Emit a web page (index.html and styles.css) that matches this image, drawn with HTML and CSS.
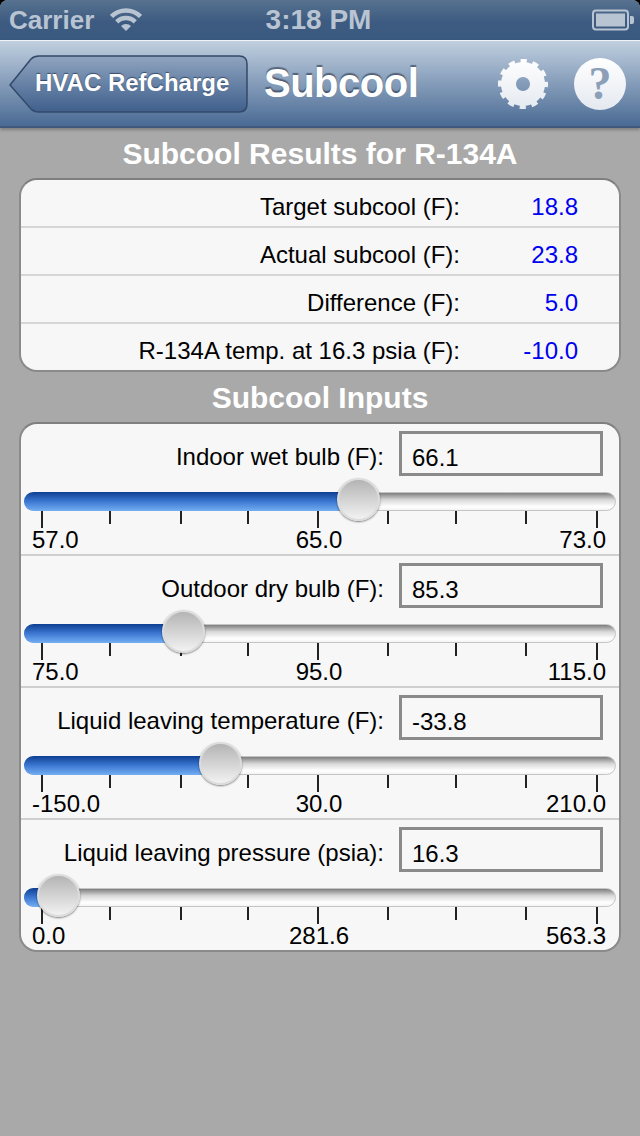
FILE: index.html
```html
<!DOCTYPE html>
<html lang="en">
<head>
<meta charset="utf-8">
<title>Subcool</title>
<link rel="stylesheet" href="styles.css">
</head>
<body>
<div class="screen">
  <header class="status">
    <div class="status-left">
      <span>Carrier</span>
      <svg class="wifi" width="32" height="24" viewBox="0 0 32 24"><path d="M16 23 L11 18 A7 7 0 0 1 21 18 Z" fill="#b9c4d3"/><path d="M6.800 13.800 A13 13 0 0 1 25.200 13.800" fill="none" stroke="#b9c4d3" stroke-width="4.500"/><path d="M1.500 8.500 A20.500 20.500 0 0 1 30.500 8.500" fill="none" stroke="#b9c4d3" stroke-width="4.500"/></svg>
    </div>
    <div class="status-time">3:18 PM</div>
    <div class="status-right">
      <svg width="42" height="22" viewBox="0 0 42 22"><rect x="1" y="1.500" width="35" height="19" rx="3" fill="none" stroke="#b9c4d3" stroke-width="2"/><rect x="4" y="4.500" width="29" height="13" fill="#b9c4d3"/><path d="M38 7 h2 a2 2 0 0 1 2 2 v4 a2 2 0 0 1 -2 2 h-2 Z" fill="#b9c4d3"/></svg>
    </div>
  </header>
  <nav class="nav">
    <a class="back">
      <svg class="back-shape" width="240" height="60" viewBox="0 0 240 60">
        <defs><linearGradient id="bk" x1="0" y1="0" x2="0" y2="1"><stop offset="0" stop-color="#8fa4bf"/><stop offset="1" stop-color="#3f5f8c"/></linearGradient></defs>
        <path d="M1 30 L22 4 Q25 1 30 1 H230 Q238 1 238 9 V49 Q238 57 230 57 H30 Q25 57 22 54 Z" fill="url(#bk)" stroke="#33496a" stroke-width="1.500"/>
      </svg>
      <span class="back-text">HVAC RefCharge</span>
    </a>
    <h1 class="title">Subcool</h1>
    <div class="nav-icons">
      <svg class="gear" width="52" height="52" viewBox="0 0 52 52">
        <defs><linearGradient id="ic" gradientUnits="userSpaceOnUse" x1="0" y1="0" x2="0" y2="52"><stop offset="0" stop-color="#ffffff"/><stop offset="1" stop-color="#e4e9f0"/></linearGradient></defs>
        <circle cx="26" cy="26" r="22.500" fill="none" stroke="url(#ic)" stroke-width="5" stroke-dasharray="6.200 5.580" stroke-dashoffset="3.100"/>
        <path fill="url(#ic)" fill-rule="evenodd" d="M26 4a22 22 0 1 0 .01 0zM26 19a7 7 0 1 1 -.01 0z"/>
      </svg>
      <div class="help">?</div>
    </div>
  </nav>
  <main class="content">
    <h2 class="heading">Subcool Results for R-134A</h2>
    <section class="card">
      <div class="result"><span class="result-label">Target subcool (F):</span><span class="result-value">18.8</span></div>
      <div class="result"><span class="result-label">Actual subcool (F):</span><span class="result-value">23.8</span></div>
      <div class="result"><span class="result-label">Difference (F):</span><span class="result-value">5.0</span></div>
      <div class="result"><span class="result-label">R-134A temp. at 16.3 psia (F):</span><span class="result-value">-10.0</span></div>
    </section>
    <h2 class="heading">Subcool Inputs</h2>
    <section class="card">
      <div class="input-row">
        <div class="field"><label class="field-label">Indoor wet bulb (F):</label><div class="field-box">66.1</div></div>
        <div class="slider"><div class="fill" style="width:57%"></div><div class="thumb" style="left:312px"></div></div>
        <div class="ticks"><i class="long"></i><i></i><i></i><i></i><i class="long"></i><i></i><i></i><i></i><i class="long"></i></div>
        <div class="scale"><span>57.0</span><span>65.0</span><span>73.0</span></div>
      </div>
      <div class="input-row">
        <div class="field"><label class="field-label">Outdoor dry bulb (F):</label><div class="field-box">85.3</div></div>
        <div class="slider"><div class="fill" style="width:27%"></div><div class="thumb" style="left:137px"></div></div>
        <div class="ticks"><i class="long"></i><i></i><i></i><i></i><i class="long"></i><i></i><i></i><i></i><i class="long"></i></div>
        <div class="scale"><span>75.0</span><span>95.0</span><span>115.0</span></div>
      </div>
      <div class="input-row">
        <div class="field"><label class="field-label">Liquid leaving temperature (F):</label><div class="field-box">-33.8</div></div>
        <div class="slider"><div class="fill" style="width:33%"></div><div class="thumb" style="left:174px"></div></div>
        <div class="ticks"><i class="long"></i><i></i><i></i><i></i><i class="long"></i><i></i><i></i><i></i><i class="long"></i></div>
        <div class="scale"><span>-150.0</span><span>30.0</span><span>210.0</span></div>
      </div>
      <div class="input-row">
        <div class="field"><label class="field-label">Liquid leaving pressure (psia):</label><div class="field-box">16.3</div></div>
        <div class="slider"><div class="fill" style="width:6%"></div><div class="thumb" style="left:12px"></div></div>
        <div class="ticks"><i class="long"></i><i></i><i></i><i></i><i class="long"></i><i></i><i></i><i></i><i class="long"></i></div>
        <div class="scale"><span>0.0</span><span>281.6</span><span>563.3</span></div>
      </div>
    </section>
  </main>
</div>
</body>
</html>
```
FILE: styles.css
```css
* { box-sizing: border-box; }
html, body { margin: 0; padding: 0; }
body { background: #000; font-family: "Liberation Sans", Arial, sans-serif; }
.screen {
  width: 640px; height: 1136px; overflow: hidden; background: #a9a9a9;
  display: flex; flex-direction: column;
  border-radius: 8px 8px 0 0;
}
.status {
  height: 40px; flex: none; display: flex; align-items: center; position: relative;
  padding: 0 6px 0 9px;
  background: linear-gradient(#57728f, #3d5b81 55%, #3b5a80);
  color: #b9c4d3; font-size: 26px; font-weight: bold;
}
.status-left { flex: 1; display: flex; align-items: center; gap: 16px; }
.wifi { margin-top: -1px; }
.status-time { position: absolute; left: 0; right: 0; text-align: center; font-size: 28px; padding-left: 37px; width: 600px; }
.status-right { display: flex; }
.nav {
  height: 88px; flex: none; display: flex; align-items: center; position: relative;
  padding-left: 9px;
  border-top: 1px solid #f0f4f8; border-bottom: 2px solid #40587c;
  background: linear-gradient(#c0cfdf, #4a6a94);
  box-shadow: 0 2px 3px rgba(0,0,0,.25);
}
.back { position: relative; width: 240px; height: 58px; flex: none; display: flex; align-items: center; }
.back-shape { position: absolute; left: 0; top: 0; }
.back-text { position: relative; padding-left: 26px; margin-top: -2px; color: #fff; font-size: 24px; font-weight: bold; text-shadow: 0 -1px 1px rgba(30,50,80,.7); }
.title { margin: 0 0 0 15px; color: #fff; font-size: 40px; letter-spacing: -.5px; font-weight: bold; text-shadow: 0 -2px 1px rgba(40,50,70,.6); flex: 1; }
.nav-icons { display: flex; align-items: center; gap: 25px; padding-right: 14px; }
.gear { display: block; margin-left: 1px; }
.help {
  width: 52px; height: 52px; border-radius: 50%;
  background: linear-gradient(#fff, #e4e9f0);
  color: #8b9fb8; font-family: "Liberation Serif", serif; font-weight: bold; font-size: 46px;
  display: flex; align-items: center; justify-content: center;
}
.content { padding: 0 19px; }
.heading { margin: 0; height: 50px; line-height: 51px; text-align: center; color: #fff; font-size: 30px; font-weight: bold; }
.card {
  background: #f7f7f7; border: 2px solid #8a8a8a; border-radius: 18px; overflow: hidden;
  border-top-color: #7f7f7f;
}
.result {
  height: 48px; display: flex; align-items: center; font-size: 24px; color: #000;
  border-bottom: 2px solid #d6d6d6; padding-top: 8px;
}
.result:last-child { border-bottom: 0; height: 46px; }
.result-label { width: 439px; text-align: right; }
.result-value { width: 118px; text-align: right; color: #0000f0; }
.input-row { height: 132px; border-bottom: 2px solid #cfcfcf; padding-top: 6px; }
.input-row:last-child { border-bottom: 0; height: 130px; }
.field { display: flex; align-items: center; height: 46px; }
.field-label { width: 363px; text-align: right; font-size: 24px; padding-top: 8px; }
.field-box {
  margin-left: 15px; width: 204px; height: 45px; border: 3px solid #8a8a8a;
  font-size: 24px; padding: 9px 0 0 10px; line-height: 30px;
}
.slider {
  position: relative; margin: 16px 0 0 3px; width: 592px; height: 19px; border-radius: 10px;
  background: linear-gradient(#7e7e7e, #d8d8d8 40%, #fff 80%, #f4f4f4);
  border: 1px solid #c4c4c4;
}
.fill {
  position: absolute; left: -1px; top: -1px; bottom: -1px; border-radius: 10px 0 0 10px;
  background: linear-gradient(#0d3f92, #3c78d2 50%, #74aef2);
}
.thumb {
  position: absolute; top: -15px; width: 43px; height: 43px; border-radius: 50%;
  background: linear-gradient(#b4b4b4, #f2f2f2);
  border: 2px solid #dcdcdc; box-shadow: 0 1px 2px rgba(0,0,0,.5);
}
.ticks {
  display: grid; grid-template-columns: 68px 71px 67px 70px 70px 68px 70px 71px 2px;
  margin: 0 0 0 20px; height: 17px;
}
.ticks i { display: block; width: 2px; height: 13px; background: #222; }
.ticks i.long { height: 17px; }
.scale {
  display: grid; grid-template-columns: 1fr auto 1fr; padding: 0 13px 0 11px;
  font-size: 24px; line-height: 26px; margin-top: -1px;
}
.scale span:last-child { justify-self: end; }
```
